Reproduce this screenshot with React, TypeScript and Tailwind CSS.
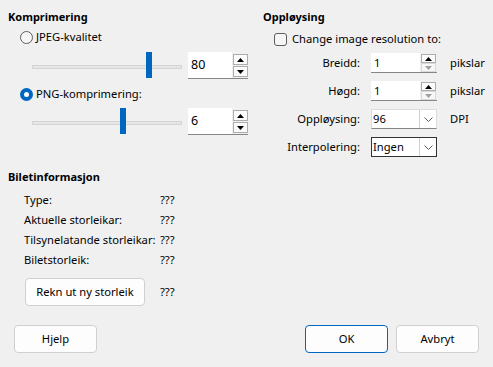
import React from "react";

const ArrowUp = ({ disabled = false }: { disabled?: boolean }) => (
  <svg width="7" height="4" viewBox="0 0 7 4">
    <path d="M0 4 L3.5 0 L7 4 Z" fill={disabled ? "#a0a0a0" : "#000"} />
  </svg>
);

const ArrowDown = ({ disabled = false }: { disabled?: boolean }) => (
  <svg width="7" height="4" viewBox="0 0 7 4">
    <path d="M0 0 L3.5 4 L7 0 Z" fill={disabled ? "#a0a0a0" : "#000"} />
  </svg>
);

const Chevron = () => (
  <svg width="9" height="5" viewBox="0 0 9 5">
    <path d="M0.5 0.5 L4.5 4.5 L8.5 0.5" fill="none" stroke="#606060" strokeWidth="1" />
  </svg>
);

const Radio = ({ checked }: { checked: boolean }) =>
  checked ? (
    <span className="w-[13px] h-[13px] rounded-full bg-[#0067c0] flex items-center justify-center shrink-0">
      <span className="w-[5px] h-[5px] rounded-full bg-white" />
    </span>
  ) : (
    <span className="w-[13px] h-[13px] rounded-full border border-[#5d5d5d] bg-[#f6f6f6] shrink-0" />
  );

const Slider = ({ thumb }: { thumb: number }) => (
  <div className="relative w-[150px] h-[28px] ml-[32px]">
    <div className="absolute left-0 right-0 top-[13px] h-[4px] bg-[#e6e6e6] border border-[#d4d4d4]" />
    <div
      className="absolute top-0 w-[6px] h-[26px] bg-[#0067c0]"
      style={{ left: thumb }}
    />
  </div>
);

const BigSpin = ({ value }: { value: string }) => (
  <div className="flex ml-[6px] h-[27px] w-[60px] border-b border-[#868686]">
    <div className="w-[44px] bg-white pl-[3px] flex items-center text-[12.5px]">{value}</div>
    <div className="flex flex-col gap-[1px] ml-[1px] pt-[2px]">
      <div className="w-[15px] h-[11px] border border-[#adadad] bg-[#fbfbfb] flex items-center justify-center">
        <ArrowUp />
      </div>
      <div className="w-[15px] h-[11px] border border-[#adadad] bg-[#fbfbfb] flex items-center justify-center">
        <ArrowDown />
      </div>
    </div>
  </div>
);

const SmallSpin = ({ value }: { value: string }) => (
  <div className="flex h-[20px] w-[66px] border-b border-[#868686]">
    <div className="w-[49px] bg-white pl-[3px] flex items-center">{value}</div>
    <div className="flex flex-col ml-[1px] pt-[1px]">
      <div className="w-[15px] h-[9px] border border-[#adadad] bg-[#fbfbfb] flex items-center justify-center">
        <ArrowUp />
      </div>
      <div className="w-[15px] h-[9px] border border-[#d9d9d9] bg-[#f7f7f7] flex items-center justify-center">
        <ArrowDown disabled />
      </div>
    </div>
  </div>
);

const Combo = ({ value, focused = false }: { value: string; focused?: boolean }) => (
  <div
    className={
      focused
        ? "flex h-[20px] w-[66px] border border-[#333333] bg-white"
        : "flex h-[20px] w-[66px] border border-[#dcdcdc] border-b-[#868686] bg-white"
    }
  >
    <div className="flex-1 pl-[1px] flex items-center">{value}</div>
    <div className="w-[17px] border-l border-[#d0d0d0] flex items-center justify-center">
      <Chevron />
    </div>
  </div>
);

const Btn = ({ label, primary = false, w = "w-[83px]" }: { label: string; primary?: boolean; w?: string }) => (
  <div
    className={
      "h-[28px] rounded-[4px] bg-[#fdfdfd] flex items-center justify-center border whitespace-nowrap " +
      w +
      (primary ? " border-[#0067c0]" : " border-[#d0d0d0]")
    }
  >
    {label}
  </div>
);

const info = [
  "Type:",
  "Aktuelle storleikar:",
  "Tilsynelatande storleikar:",
  "Biletstorleik:",
];

const formRows = [
  { label: "Breidd:", kind: "spin", value: "1", unit: "pikslar" },
  { label: "Høgd:", kind: "spin", value: "1", unit: "pikslar" },
  { label: "Oppløysing:", kind: "combo", value: "96", unit: "DPI" },
  { label: "Interpolering:", kind: "focus", value: "Ingen", unit: "" },
];

export default function App() {
  return (
    <div
      className="w-[493px] h-[367px] bg-[#f0f0f0] text-black text-[11.2px] leading-[16px] flex flex-col overflow-hidden whitespace-nowrap"
      style={{ fontFamily: '"Noto Sans", "Open Sans", sans-serif' }}
    >
      <div className="flex">
        {/* left column */}
        <div className="w-[263px] pt-[9px] flex flex-col">
          <div className="h-[16px] pl-[8px] font-bold text-[11px]">Komprimering</div>
          <div className="mt-[4px] h-[16px] flex items-center pl-[20px]">
            <Radio checked={false} />
            <span className="ml-[3px]">JPEG-kvalitet</span>
          </div>
          <div className="mt-[7px] flex">
            <Slider thumb={114} />
            <BigSpin value="80" />
          </div>
          <div className="mt-[6px] h-[16px] flex items-center pl-[20px]">
            <Radio checked />
            <span className="ml-[3px]">PNG-komprimering:</span>
          </div>
          <div className="mt-[6px] flex">
            <Slider thumb={88} />
            <BigSpin value="6" />
          </div>

          <div className="mt-[33px] h-[16px] pl-[8px] font-bold text-[11px]">Biletinformasjon</div>
          <div className="mt-[5px] flex flex-col">
            {info.map((l) => (
              <div key={l} className="h-[20px] flex items-center pl-[24px]">
                <span className="w-[136px]">{l}</span>
                <span>???</span>
              </div>
            ))}
          </div>
          <div className="mt-[8px] flex items-center pl-[25px]">
            <Btn label="Rekn ut ny storleik" w="w-[120px]" />
            <span className="ml-[15px]">???</span>
          </div>
        </div>

        {/* right column */}
        <div className="flex-1 pt-[9px] flex flex-col">
          <div className="h-[16px] font-bold text-[11px]">Oppløysing</div>
          <div className="mt-[6px] h-[16px] flex items-center pl-[11px]">
            <span className="w-[13px] h-[13px] rounded-[3px] border border-[#5d5d5d] bg-[#f6f6f6]" />
            <span className="ml-[5px]">Change image resolution to:</span>
          </div>
          <div className="mt-[6px] flex flex-col gap-[8px]">
            {formRows.map((r) => (
              <div key={r.label} className="flex items-center h-[20px]">
                <span className="w-[97px] text-right">{r.label}</span>
                <span className="ml-[11px]">
                  {r.kind === "spin" ? (
                    <SmallSpin value={r.value} />
                  ) : (
                    <Combo value={r.value} focused={r.kind === "focus"} />
                  )}
                </span>
                <span className="ml-[13px]">{r.unit}</span>
              </div>
            ))}
          </div>
        </div>
      </div>

      <div className="mt-auto mb-[14px] flex items-center px-[14px]">
        <Btn label="Hjelp" />
        <div className="ml-auto flex gap-[8px]">
          <Btn label="OK" primary />
          <Btn label="Avbryt" />
        </div>
      </div>
    </div>
  );
}
